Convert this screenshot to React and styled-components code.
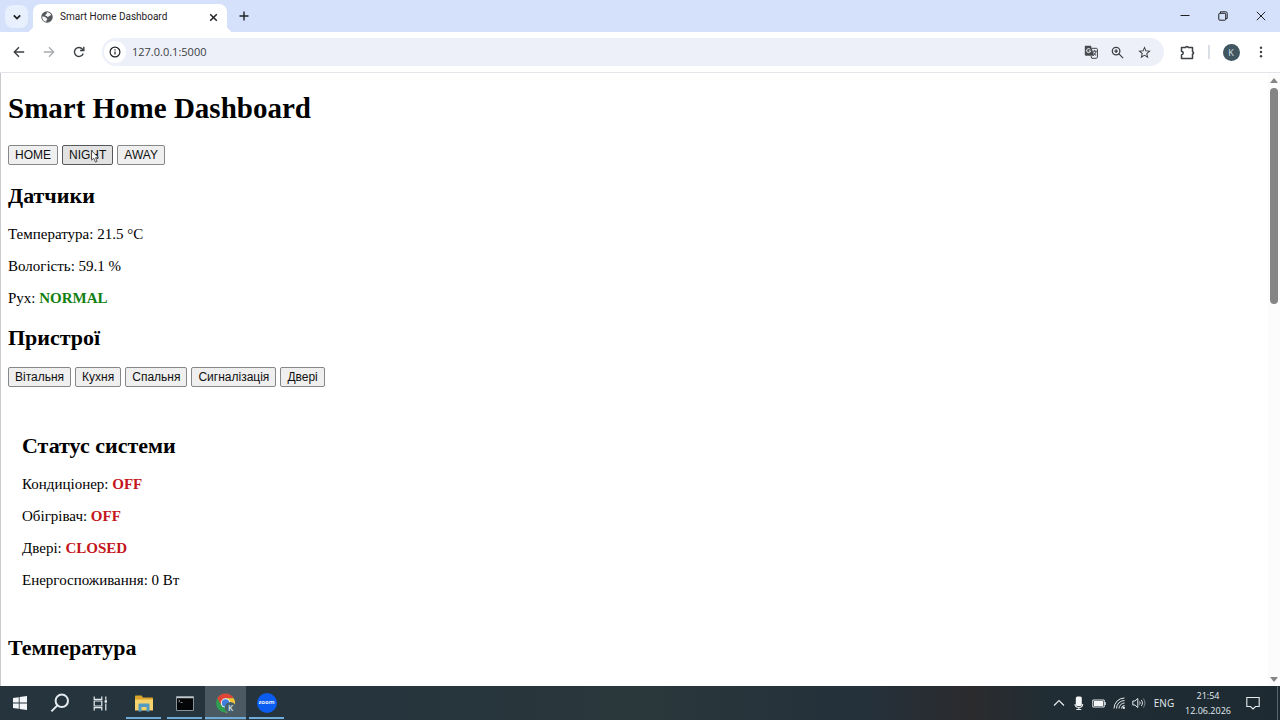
import React from "react";
import styled, { createGlobalStyle, css } from "styled-components";
import { MdStarBorder } from "react-icons/md";

const modes = ["HOME", "NIGHT", "AWAY"];
const devices = ["Вітальня", "Кухня", "Спальня", "Сигналізація", "Двері"];

const Icon = ({ size = 16, width, box = "0 0 16 16", stroke = 1.3, children }) => (
  <svg
    width={width || size}
    height={size}
    viewBox={box}
    fill="none"
    stroke="currentColor"
    strokeWidth={stroke}
    aria-hidden="true"
  >
    {children}
  </svg>
);

const TabStrip = () => (
  <StyledTabStrip>
    <SearchTabs aria-label="Search tabs">
      <Icon size={10} box="0 0 10 10" stroke={1.8}>
        <path d="M1.8 3.4 5 6.6l3.2-3.2" />
      </Icon>
    </SearchTabs>
    <Tab>
      <Icon size={12} box="0 0 24 24">
        <circle cx="12" cy="12" r="11.5" fill="#54585d" stroke="none" />
        <path
          d="M2.5 11c3 0 6 0 7 2s3 1 3 3-2 2-2 5.500C5 21 2 16 2.500 11ZM11 2.500c4-.5 8 2 9.500 5.500-2 0-2 2-4 2s-1 3-3 2-1-2-3-2-3-2-1-3 3-2 1.500-4.500Z"
          fill="#f4f5f7"
          stroke="none"
        />
      </Icon>
      <TabTitle>Smart Home Dashboard</TabTitle>
      <TabClose aria-label="Close tab">
        <Icon size={9} box="0 0 9 9" stroke={1.5}>
          <path d="m1.2 1.2 6.6 6.6m0-6.6L1.2 7.8" />
        </Icon>
      </TabClose>
    </Tab>
    <NewTab aria-label="New tab">
      <Icon size={10} box="0 0 10 10" stroke={1.4}>
        <path d="M5 .5v9M.5 5h9" />
      </Icon>
    </NewTab>
    <WindowControls>
      <WindowButton aria-label="Minimize">
        <Icon size={10} box="0 0 10 10" stroke={1}>
          <path d="M.5 4.5h9" />
        </Icon>
      </WindowButton>
      <WindowButton aria-label="Restore">
        <Icon size={10} box="0 0 10 10" stroke={1}>
          <rect x=".8" y="2.3" width="6.9" height="6.9" rx=".8" />
          <path d="M2.5 2.2V.8h5.3a1.4 1.4 0 0 1 1.4 1.4v5.3H7.8" />
        </Icon>
      </WindowButton>
      <WindowButton aria-label="Close">
        <Icon size={10} box="0 0 10 10" stroke={1}>
          <path d="m.8.8 8.4 8.4m0-8.4L.8 9.2" />
        </Icon>
      </WindowButton>
    </WindowControls>
  </StyledTabStrip>
);

const Toolbar = () => (
  <StyledToolbar>
    <ToolGroup>
      <ToolButton aria-label="Back">
        <Icon size={12} box="0 0 12 12" stroke={1.4}>
          <path d="M11.2 6H1.5M6 1.3 1.3 6 6 10.7" />
        </Icon>
      </ToolButton>
      <ToolButton $muted aria-label="Forward">
        <Icon size={12} box="0 0 12 12" stroke={1.3}>
          <path d="M.8 6h9.7M6 1.3 10.7 6 6 10.7" />
        </Icon>
      </ToolButton>
      <ToolButton aria-label="Reload">
        <Icon size={12} box="0 0 12 12" stroke={1.4}>
          <path d="M10.2 7.4A4.5 4.5 0 1 1 9.5 3.2L10.8 4.4" />
          <path d="M10.8.8v3.7H7.1" />
        </Icon>
      </ToolButton>
    </ToolGroup>
    <Omnibox>
      <SiteInfo aria-label="Site information">
        <Icon size={12} box="0 0 12 12" stroke={1.2}>
          <circle cx="6" cy="6" r="4.9" />
          <path d="M6 5.4v3.2M6 3.2v1.2" />
        </Icon>
      </SiteInfo>
      <Address aria-label="Address" defaultValue="127.0.0.1:5000" />
      <OmniButton aria-label="Translate">
        <Icon size={14} box="0 0 14 14" stroke={1}>
          <path d="M1 .8h6l3 10H2a1.2 1.2 0 0 1-1.2-1.2V1Z" fill="#474b50" stroke="none" />
          <path d="M8 3.3h4.4c.6 0 1 .4 1 1v8c0 .6-.4 1-1 1H7.8L7 11" />
          <path d="M8.6 6.2h4M10.6 5.2v1M12 6.3c-.4 2-1.4 3.2-2.8 4.2M9.6 7.5c.6 1.3 1.3 2.2 2.5 3" stroke={0.8} />
          <path d="M6.3 4.5A2 2 0 1 0 6.6 6H4.8" stroke="#fff" />
        </Icon>
      </OmniButton>
      <OmniButton aria-label="Zoom">
        <Icon size={13} box="0 0 13 13" stroke={1.3}>
          <circle cx="5.1" cy="5.1" r="3.8" />
          <path d="m7.9 7.9 4.2 4.2M5.1 3.3v3.6M3.3 5.1h3.6" />
        </Icon>
      </OmniButton>
      <OmniButton aria-label="Bookmark this tab">
        <MdStarBorder size={15} />
      </OmniButton>
    </Omnibox>
    <ToolGroup>
      <ToolButton aria-label="Extensions">
        <Icon size={15} box="0 0 15 15" stroke={1.5}>
          <path
            d="M1.500 2.500h4.200a1.200 1 0 0 1 2.400 0h4.400v4.200a1 1.200 0 0 1 0 2.400v4.400h-11v-3.700a1.700 1.700 0 0 0 0-3.400Z"
            strokeLinejoin="round"
          />
        </Icon>
      </ToolButton>
      <Separator />
      <ToolButton aria-label="Profile">
        <Avatar>K</Avatar>
      </ToolButton>
      <ToolButton aria-label="Menu">
        <Icon size={12} box="0 0 12 12">
          <g fill="currentColor" stroke="none">
            <circle cx="6" cy="1.8" r="1.2" />
            <circle cx="6" cy="6" r="1.2" />
            <circle cx="6" cy="10.2" r="1.2" />
          </g>
        </Icon>
      </ToolButton>
    </ToolGroup>
  </StyledToolbar>
);

const Pointer = () => (
  <StyledPointer width="9" height="13" viewBox="0 0 9 13" aria-hidden="true">
    <path
      d="M.6.8v9.4l2.2-2 1.6 3.9 1.7-.7-1.6-3.7h3Z"
      fill="#fff"
      stroke="#333"
      strokeWidth=".8"
    />
  </StyledPointer>
);

const Dashboard = () => (
  <StyledDashboard>
    <Title>Smart Home Dashboard</Title>
    <ButtonRow>
      {modes.map((mode) => (
        <PageButton key={mode} $hovered={mode === "NIGHT"}>
          {mode}
          {mode === "NIGHT" && <Pointer />}
        </PageButton>
      ))}
    </ButtonRow>
    <Heading>Датчики</Heading>
    <Line>Температура: 21.5 °C</Line>
    <Line>Вологість: 59.1 %</Line>
    <Line>
      Рух: <State $color="#128012">NORMAL</State>
    </Line>
    <Heading>Пристрої</Heading>
    <ButtonRow>
      {devices.map((device) => (
        <PageButton key={device}>{device}</PageButton>
      ))}
    </ButtonRow>
    <StatusPanel>
      <Heading>Статус системи</Heading>
      <Line>
        Кондиціонер: <State $color="#c4161c">OFF</State>
      </Line>
      <Line>
        Обігрівач: <State $color="#c4161c">OFF</State>
      </Line>
      <Line>
        Двері: <State $color="#c4161c">CLOSED</State>
      </Line>
      <Line>Енергоспоживання: 0 Вт</Line>
    </StatusPanel>
    <Heading>Температура</Heading>
  </StyledDashboard>
);

const Scrollbar = () => (
  <StyledScrollbar>
    <svg width="8" height="5" viewBox="0 0 8 5" aria-hidden="true">
      <path d="M0 5 4 0l4 5Z" fill="#858585" />
    </svg>
    <Track>
      <Thumb />
    </Track>
    <svg width="8" height="5" viewBox="0 0 8 5" aria-hidden="true">
      <path d="M0 0h8L4 5Z" fill="#858585" />
    </svg>
  </StyledScrollbar>
);

const Taskbar = () => (
  <StyledTaskbar>
    <SystemButtons>
      <TaskButton aria-label="Start">
        <Icon size={14} box="0 0 14 14">
          <path
            d="M0 2 5.8 1.2v5.4H0ZM6.6 1.1 14 0v6.6H6.6ZM0 7.4h5.8v5.4L0 12ZM6.6 7.4H14V14l-7.4-1.1Z"
            fill="#f2f6f8"
            stroke="none"
          />
        </Icon>
      </TaskButton>
      <TaskButton aria-label="Search">
        <Icon size={20} box="0 0 20 20" stroke={2}>
          <circle cx="11.8" cy="7.8" r="6.2" />
          <path d="m7.4 12.4-6 6" />
        </Icon>
      </TaskButton>
      <TaskButton aria-label="Task view">
        <Icon size={15} box="0 0 15 15" stroke={1.2}>
          <path d="M1.2.5v2.8h7.6V.5M1.2 14.5v-2.8h7.6v2.8M1.2 5h7.6v5H1.2ZM12.8.5v3.3M12.8 7.6v6.9" />
          <path d="M11.6 4.2H14v2.5h-2.4Z" fill="currentColor" stroke="none" />
        </Icon>
      </TaskButton>
    </SystemButtons>
    <TaskButton $running aria-label="File Explorer">
      <Icon size={17} width={20} box="0 0 20 17">
        <g stroke="none">
          <path d="M1 1.5C1 1 1.3.5 2 .5h5.500l1.500 2H18c.6 0 1 .4 1 1V15H1Z" fill="#dba52d" />
          <path d="M1 4.500h18V15.500H1Z" fill="#f8d36c" />
          <path d="M4.500 9.500c0-.6.4-1 1-1h9c.6 0 1 .4 1 1v7h-3V12h-5v4.500h-3Z" fill="#519bc5" />
        </g>
      </Icon>
    </TaskButton>
    <TaskButton $running aria-label="Command Prompt">
      <Icon size={15} width={18} box="0 0 18 15">
        <path d="M.5.5h17v14H.5Z" fill="#050607" stroke="#87939a" strokeWidth="1" />
        <path d="M.5 1.500h17" stroke="#c1c8cb" strokeWidth="1.500" />
        <path d="m2.500 4 1.500 1-1.500 1M4.500 6.500h2" stroke="#b8bfc2" strokeWidth=".7" />
      </Icon>
    </TaskButton>
    <TaskButton $running $active aria-label="Google Chrome">
      <Icon size={22} box="0 0 22 22">
        <g stroke="none">
          <circle cx="10.500" cy="11" r="9.500" fill="#2f9e50" />
          <path d="M2.300 6.200a9.500 9.500 0 0 1 16.400 0h-8.200L6.400 13.400Z" fill="#df4438" />
          <path d="M10.500 6.200h8.200A9.500 9.500 0 0 1 10.500 20.500l4.100-7.100Z" fill="#f4c533" />
          <circle cx="10.500" cy="11" r="4.700" fill="#f5f7f8" />
          <circle cx="10.500" cy="11" r="3.700" fill="#3f7fdb" />
          <circle cx="15.500" cy="15.800" r="5.700" fill="#48606b" />
        </g>
        <text x="15.500" y="18.600" textAnchor="middle" fontSize="8" fontWeight="600" fill="#dce6eb" stroke="none">
          K
        </text>
      </Icon>
    </TaskButton>
    <TaskButton $running aria-label="Zoom">
      <ZoomLogo>zoom</ZoomLogo>
    </TaskButton>
    <Tray>
      <TrayButton aria-label="Show hidden icons">
        <Icon size={12} box="0 0 12 12" stroke={1.2}>
          <path d="m1 8.500 5-5 5 5" />
        </Icon>
      </TrayButton>
      <TrayButton aria-label="Microphone">
        <Icon size={14} box="0 0 14 14" stroke={1.1}>
          <rect x="3.800" y=".5" width="6" height="9.500" rx="1.500" fill="#f4f6f7" stroke="none" />
          <path d="M3 8c0 4.500 7.700 4.500 7.700 0M6.800 11v2.500M4.300 13.500h5" />
        </Icon>
      </TrayButton>
      <TrayButton aria-label="Battery">
        <Icon size={9} width={14} box="0 0 14 9" stroke={1}>
          <path d="M.8 1h11.400v7H.8Z" />
          <path d="M2 2h9v5H2ZM12.500 3h1.200v3h-1.200Z" fill="#f4f6f7" stroke="none" />
        </Icon>
      </TrayButton>
      <TrayButton aria-label="Network">
        <Icon size={12} box="0 0 12 12" stroke={1}>
          <path d="M1 11.500A10.500 10.500 0 0 1 11.500 1M3.500 11.500a8 8 0 0 1 8-8M6 11.500A5.500 5.500 0 0 1 11.500 6M8.500 11.500a3 3 0 0 1 3-3" />
          <circle cx="10.800" cy="10.800" r="1.200" fill="currentColor" stroke="none" />
        </Icon>
      </TrayButton>
      <TrayButton aria-label="Volume">
        <Icon size={12} width={14} box="0 0 14 12" stroke={1}>
          <path d="M.8 4h2L5.800 1.500v9L2.800 8h-2ZM7.500 4.500c.8 1 .8 2 0 3M9.300 3c1.500 2 1.500 4 0 6" />
          <path d="M11.200 1.500c2.300 3 2.300 6 0 9" opacity=".5" />
        </Icon>
      </TrayButton>
      <Language>ENG</Language>
      <Clock>
        <span>21:54</span>
        <span>12.06.2026</span>
      </Clock>
      <Notifications aria-label="Notifications">
        <Icon size={14} box="0 0 14 14" stroke={1.1}>
          <path d="M.8 1.500h12.400v9H9.500L7 13l-2.500-2.500H.8Z" />
        </Icon>
      </Notifications>
      <ShowDesktop aria-label="Show desktop" />
    </Tray>
  </StyledTaskbar>
);

const App = () => {
  return (
    <>
      <GlobalStyle />
      <Screen>
        <TabStrip />
        <Toolbar />
        <Viewport>
          <Dashboard />
          <Scrollbar />
        </Viewport>
        <Taskbar />
      </Screen>
    </>
  );
};

export default App;

const GlobalStyle = createGlobalStyle`
  * {
    box-sizing: border-box;
  }
  body {
    margin: 0;
    font-family: "Open Sans", "Noto Sans", sans-serif;
    color: #1f2124;
  }
  svg {
    display: block;
    flex: none;
  }
`;

const plainButton = css`
  display: flex;
  align-items: center;
  justify-content: center;
  flex: none;
  padding: 0;
  border: 0;
  background: none;
  color: inherit;
  font: inherit;
`;

const Screen = styled.div`
  display: flex;
  flex-direction: column;
  height: 100vh;
  overflow: hidden;
  background-color: #fff;
`;

const StyledTabStrip = styled.div`
  display: flex;
  flex: none;
  height: 32px;
  padding-left: 5px;
  background-color: #d5e1fb;
`;
const SearchTabs = styled.button`
  ${plainButton}
  width: 23px;
  height: 23px;
  margin: 5px 5px 0 0;
  border-radius: 8px;
  background-color: #e8effd;
`;
const Tab = styled.div`
  position: relative;
  display: flex;
  align-items: center;
  gap: 7px;
  width: 194px;
  margin-top: 4px;
  padding: 0 9px 2px 8px;
  border-radius: 8px 8px 0 0;
  background-color: #fff;
  &::before,
  &::after {
    content: "";
    position: absolute;
    bottom: 0;
    width: 7px;
    height: 7px;
  }
  &::before {
    right: 100%;
    background: radial-gradient(circle at 0 0, transparent 7px, #fff 7px);
  }
  &::after {
    left: 100%;
    background: radial-gradient(circle at 100% 0, transparent 7px, #fff 7px);
  }
`;
const TabTitle = styled.span`
  flex: 1;
  font-family: Roboto, sans-serif;
  font-size: 10px;
  line-height: 16px;
  white-space: nowrap;
`;
const TabClose = styled.button`
  ${plainButton}
  width: 10px;
  height: 16px;
`;
const NewTab = styled.button`
  ${plainButton}
  width: 34px;
`;
const WindowControls = styled.div`
  display: flex;
  margin-left: auto;
`;
const WindowButton = styled.button`
  ${plainButton}
  width: 38px;
`;

const StyledToolbar = styled.div`
  display: flex;
  align-items: center;
  flex: none;
  gap: 8px;
  height: 41px;
  padding: 0 4px;
  border-bottom: 1px solid #e3e5ea;
`;
const ToolButton = styled.button`
  ${plainButton}
  width: 30px;
  height: 28px;
  color: ${({ $muted }) => ($muted ? "#a9abae" : "#3c4043")};
`;
const ToolGroup = styled.div`
  display: flex;
  align-items: center;
`;
const Omnibox = styled.div`
  display: flex;
  align-items: center;
  flex: 1;
  height: 28px;
  padding: 0 6px 0 2px;
  border-radius: 14px;
  background-color: #edf0f9;
`;
const SiteInfo = styled.button`
  ${plainButton}
  width: 22px;
  height: 22px;
  border-radius: 50%;
  background-color: #fff;
`;
const Address = styled.input`
  flex: 1;
  min-width: 0;
  padding: 0 6px;
  border: 0;
  outline: 0;
  background: none;
  color: #3b3e42;
  font: 11px/16px "Open Sans", sans-serif;
`;
const OmniButton = styled.button`
  ${plainButton}
  width: 27px;
  height: 22px;
  color: #3c4043;
`;
const Separator = styled.div`
  width: 2px;
  height: 14px;
  margin: 0 6px;
  background-color: #dbdfe6;
`;
const Avatar = styled.span`
  width: 17px;
  height: 17px;
  border-radius: 50%;
  background-color: #405661;
  color: #d5e0e6;
  font-size: 9px;
  line-height: 17px;
`;

const Viewport = styled.main`
  display: flex;
  flex: 1;
  min-height: 0;
  border-left: 1px solid #c9cbcf;
`;
const StyledDashboard = styled.div`
  flex: 1;
  overflow: hidden;
  padding: 0 7px;
  color: #000;
  font-family: "Liberation Serif", "Times New Roman", serif;
  font-size: 15px;
`;
const Title = styled.h1`
  margin: 19px 0 20px;
  font-size: 29px;
  line-height: 33px;
`;
const Heading = styled.h2`
  margin: 18px 0 16px;
  font-size: 22px;
  line-height: 26px;
`;
const Line = styled.p`
  margin: 0 0 14px;
  line-height: 18px;
`;
const State = styled.b`
  color: ${({ $color }) => $color};
`;
const ButtonRow = styled.div`
  display: flex;
  gap: 4px;
`;
const PageButton = styled.button`
  position: relative;
  height: 20px;
  padding: 0 6px;
  border: 1px solid ${({ $hovered }) => ($hovered ? "#55585c" : "#858789")};
  border-radius: 2px;
  background-color: ${({ $hovered }) => ($hovered ? "#e2e2e2" : "#efefef")};
  color: #111;
  font: 12px/16px "Liberation Sans", Arial, sans-serif;
`;
const StyledPointer = styled.svg`
  position: absolute;
  top: 4px;
  left: calc(50% + 3px);
`;
const StatusPanel = styled.section`
  margin: 14px 0;
  padding: 14px;
  overflow: hidden;
`;

const StyledScrollbar = styled.div`
  display: flex;
  flex-direction: column;
  align-items: center;
  gap: 5px;
  width: 12px;
  padding: 5px 0 4px;
  background-color: #fcfcfc;
`;
const Track = styled.div`
  flex: 1;
  width: 8px;
`;
const Thumb = styled.div`
  height: 37%;
  border-radius: 4px;
  background-color: #858585;
`;

const StyledTaskbar = styled.footer`
  display: flex;
  flex: none;
  height: 34px;
  background: linear-gradient(90deg, #26343d 0 30%, #2a373b 50%, #24303a 68%, #2b2b2d 76%, #202d34 82%, #1d2a31);
  color: #e4ebef;
`;
const TaskButton = styled.button`
  ${plainButton}
  position: relative;
  width: 41px;
  background-color: ${({ $active }) => ($active ? "#4b5a62" : "transparent")};
  &::after {
    content: "";
    display: ${({ $running }) => ($running ? "block" : "none")};
    position: absolute;
    right: ${({ $active }) => ($active ? "0" : "3px")};
    bottom: 1px;
    left: ${({ $active }) => ($active ? "0" : "3px")};
    height: 2px;
    background-color: #70acd9;
  }
`;
const SystemButtons = styled.div`
  display: flex;
  margin-right: 3px;
  ${TaskButton} {
    width: 40px;
  }
`;
const ZoomLogo = styled.span`
  width: 20px;
  height: 20px;
  border-radius: 50%;
  background-color: #0b5cf0;
  color: #e4edff;
  font-size: 6px;
  font-weight: 700;
  line-height: 18px;
`;
const Tray = styled.div`
  display: flex;
  align-items: center;
  margin-left: auto;
`;
const TrayButton = styled.button`
  ${plainButton}
  width: 20px;
  height: 34px;
`;
const Language = styled.span`
  width: 30px;
  font-size: 10px;
  line-height: 15px;
  text-align: center;
`;
const Clock = styled.time`
  display: flex;
  flex-direction: column;
  width: 58px;
  font-size: 9px;
  line-height: 15px;
  text-align: center;
`;
const Notifications = styled.button`
  ${plainButton}
  width: 32px;
  height: 34px;
`;
const ShowDesktop = styled.button`
  ${plainButton}
  width: 3px;
  height: 34px;
  margin-left: 8px;
  border-left: 1px solid #5a666c;
`;
